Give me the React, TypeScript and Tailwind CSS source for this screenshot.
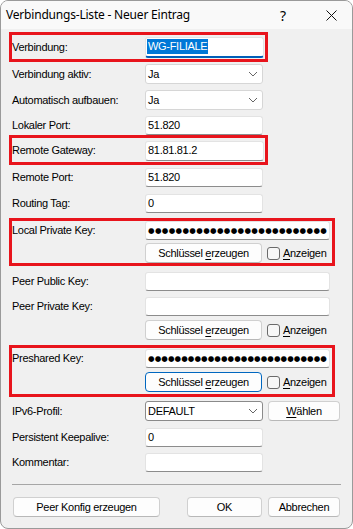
import React from "react";

const FONT = { fontFamily: '"Liberation Sans", Arial, sans-serif' };

function Label({ children }: { children: React.ReactNode }) {
  return <div className="w-[133px] shrink-0 text-[11px] tracking-[-0.3px] text-black">{children}</div>;
}

function TextBox({ value, w = 118, h = 19 }: { value?: string; w?: number; h?: number }) {
  return (
    <div
      className="flex items-center rounded-[3px] border border-[#e3e3e3] border-b-[#8c8c8c] bg-white pl-[2px] text-[11px] tracking-[-0.3px] text-black"
      style={{ width: w, height: h }}
    >
      {value}
    </div>
  );
}

function Chevron() {
  return (
    <svg width="10" height="6" viewBox="0 0 10 6" className="mr-[4px]">
      <path d="M1 1 L5 5 L9 1" fill="none" stroke="#555" strokeWidth="0.9" />
    </svg>
  );
}

function Select({ value, dark = false }: { value: string; dark?: boolean }) {
  return (
    <div
      className={
        "flex h-[20px] w-[118px] items-center justify-between rounded-[3px] border bg-white pl-[2px] text-[11px] tracking-[-0.3px] text-black " +
        (dark ? "border-[#8a8a8a]" : "border-[#d6d6d6]")
      }
    >
      <span>{value}</span>
      <Chevron />
    </div>
  );
}

function Button({
  children,
  w,
  focused = false,
}: {
  children: React.ReactNode;
  w: number;
  focused?: boolean;
}) {
  return (
    <div
      className={
        "flex h-[20px] shrink-0 items-center justify-center rounded-[4px] border bg-[#fdfdfd] text-[11px] tracking-[-0.3px] text-black " +
        (focused ? "border-[#0067c0]" : "border-[#d0d0d0] border-b-[#b8b8b8]")
      }
      style={{ width: w }}
    >
      {children}
    </div>
  );
}

// masked password field
function Dots({ count, w }: { count: number; w: number }) {
  return (
    <div
      className="flex h-[19px] items-center justify-between overflow-hidden rounded-[3px] border border-[#e3e3e3] border-b-[#8c8c8c] bg-white pl-[2px] pr-[2px] text-[7.5px] leading-none text-black"
      style={{ width: w, fontFamily: '"DejaVu Sans", sans-serif' }}
    >
      {Array.from({ length: count }).map((_, i) => (
        <span key={i}>●</span>
      ))}
    </div>
  );
}

function KeyButtons({ focused = false }: { focused?: boolean }) {
  return (
    <div className="flex h-[20px] items-center">
      <div className="w-[133px] shrink-0" />
      <Button w={117} focused={focused}>
        Schlüssel&nbsp;<span className="underline underline-offset-2">e</span>rzeugen
      </Button>
      <div className="ml-[5px] h-[13px] w-[13px] rounded-[3px] border border-[#6a6a6a] bg-[#f7f7f7]" />
      <span className="ml-[3px] text-[11px] tracking-[-0.3px] text-black">
        <span className="underline underline-offset-2">A</span>nzeigen
      </span>
    </div>
  );
}

export default function App() {
  return (
    <div
      className="flex h-[529px] w-[353px] flex-col overflow-hidden rounded-[8px] border border-[#9a9a9a] bg-[#f0f0f0]"
      style={FONT}
    >
      {/* title bar */}
      <div
        className="flex h-[28px] shrink-0 items-center bg-[#f9f9f9] pl-[5px] text-[12px] text-black"
        style={{ fontFamily: '"Noto Sans", "Open Sans", sans-serif' }}
      >
        <span className="tracking-[-0.2px]">Verbindungs-Liste - Neuer Eintrag</span>
        <span className="ml-auto mr-[40px] text-[14px]">?</span>
        <svg width="11" height="11" viewBox="0 0 11 11" className="mr-[15px]">
          <path d="M0.5 0.5 L10.5 10.5 M10.5 0.5 L0.5 10.5" stroke="#111" strokeWidth="1" />
        </svg>
      </div>

      <div className="flex flex-col pl-[8px]">
        {/* Verbindung */}
        <div className="mt-[3px] flex h-[30px] w-[259px] items-center border-[3px] border-[#e8141c]">
          <Label>Verbindung:</Label>
          <div className="flex h-[21px] w-[119px] items-center rounded-[3px] border border-[#e3e3e3] border-b-2 border-b-[#005fb8] bg-white pl-[1px] text-[11px] tracking-[-0.3px]">
            <span className="bg-[#0078d7] px-[1px] leading-[15px] text-white">WG-FILIALE</span>
          </div>
        </div>

        <div className="mt-[2px] flex h-[20px] items-center pl-[3px]">
          <Label>Verbindung aktiv:</Label>
          <Select value="Ja" />
        </div>
        <div className="mt-[6px] flex h-[20px] items-center pl-[3px]">
          <Label>Automatisch aufbauen:</Label>
          <Select value="Ja" />
        </div>
        <div className="mt-[6px] flex h-[19px] items-center pl-[3px]">
          <Label>Lokaler Port:</Label>
          <TextBox value="51.820" />
        </div>

        {/* Remote Gateway */}
        <div className="flex h-[30px] w-[259px] items-center border-[3px] border-[#e8141c] pt-[1px]">
          <Label>Remote Gateway:</Label>
          <TextBox value="81.81.81.2" w={119} h={20} />
        </div>

        <div className="mt-[3px] flex h-[19px] items-center pl-[3px]">
          <Label>Remote Port:</Label>
          <TextBox value="51.820" />
        </div>
        <div className="mt-[7px] flex h-[19px] items-center pl-[3px]">
          <Label>Routing Tag:</Label>
          <TextBox value="0" />
        </div>

        {/* Local Private Key */}
        <div className="mt-[5px] flex w-[326px] flex-col gap-[3px] border-[3px] border-[#e8141c]">
          <div className="flex h-[19px] items-center">
            <Label>Local Private Key:</Label>
            <Dots count={26} w={185} />
          </div>
          <KeyButtons />
        </div>

        <div className="mt-[6px] flex h-[19px] items-center pl-[3px]">
          <Label>Peer Public Key:</Label>
          <TextBox w={185} />
        </div>
        <div className="mt-[6px] flex h-[19px] items-center pl-[3px]">
          <Label>Peer Private Key:</Label>
          <TextBox w={185} />
        </div>
        <div className="mt-[4px] pl-[3px]">
          <KeyButtons />
        </div>

        {/* Preshared Key */}
        <div className="mt-[5px] flex w-[326px] flex-col gap-[4px] border-[3px] border-[#e8141c] pb-[2px] pt-[1px]">
          <div className="flex h-[19px] items-center">
            <Label>Preshared Key:</Label>
            <Dots count={27} w={185} />
          </div>
          <KeyButtons focused />
        </div>

        <div className="mt-[4px] flex h-[20px] items-center pl-[3px]">
          <Label>IPv6-Profil:</Label>
          <Select value="DEFAULT" dark />
          <div className="ml-[5px]">
            <Button w={72}>
              <span className="underline underline-offset-2">W</span>ählen
            </Button>
          </div>
        </div>
        <div className="mt-[7px] flex h-[19px] items-center pl-[3px]">
          <Label>Persistent Keepalive:</Label>
          <TextBox value="0" />
        </div>
        <div className="mt-[6px] flex h-[19px] items-center pl-[3px]">
          <Label>Kommentar:</Label>
          <TextBox />
        </div>

        <div className="ml-[3px] mt-[12px] h-px w-[329px] bg-[#a6a6a6]" />

        <div className="mt-[12px] flex items-center pl-[4px]">
          <Button w={147}>Peer Konfig erzeugen</Button>
          <div className="ml-[27px]">
            <Button w={75}>OK</Button>
          </div>
          <div className="ml-[6px]">
            <Button w={72}>Abbrechen</Button>
          </div>
        </div>
      </div>
    </div>
  );
}
